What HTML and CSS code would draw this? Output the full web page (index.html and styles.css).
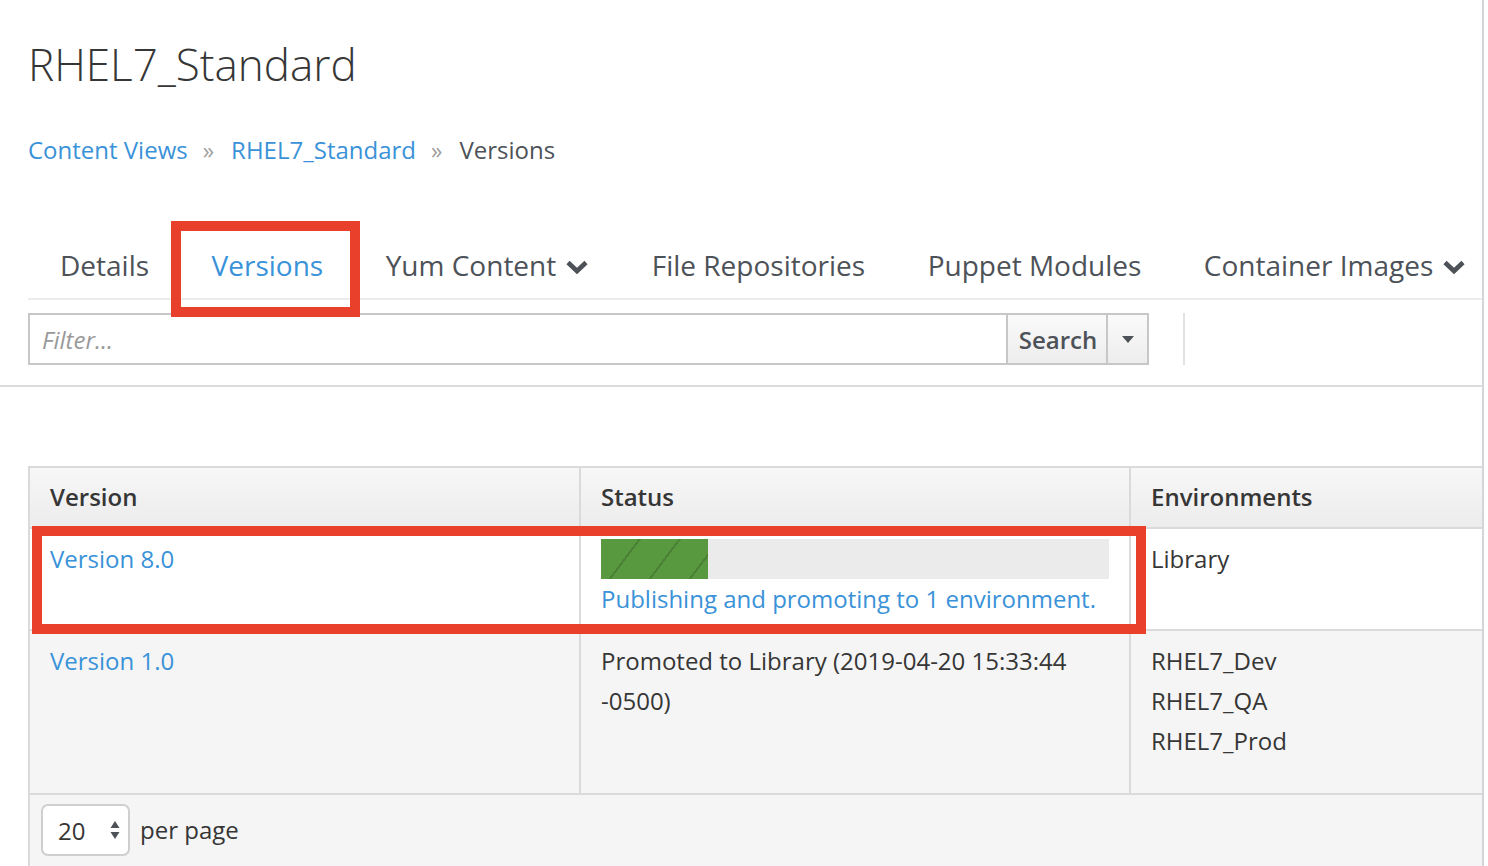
FILE: index.html
```html
<!DOCTYPE html>
<html lang="en">
<head>
<meta charset="utf-8">
<title>RHEL7_Standard - Versions</title>
<link rel="stylesheet" href="styles.css">
</head>
<body>
<div class="page">
  <section class="head">
    <h1 class="title">RHEL7_Standard</h1>
    <nav class="crumbs">
      <a class="crumb-link" href="#">Content Views</a>
      <span class="crumb-sep">»</span>
      <a class="crumb-link" href="#">RHEL7_Standard</a>
      <span class="crumb-sep">»</span>
      <span class="crumb-current">Versions</span>
    </nav>
    <ul class="tabs">
      <li class="tab">Details</li>
      <li class="tab tab-active">Versions<span class="annot annot-tab"></span></li>
      <li class="tab">Yum Content<svg class="chev" viewBox="0 0 24 16" width="24" height="16"><path d="M3 3.5 L12 12 L21 3.5" fill="none" stroke="#4d5258" stroke-width="4.6" stroke-linecap="butt" stroke-linejoin="miter"/></svg></li>
      <li class="tab">File Repositories</li>
      <li class="tab">Puppet Modules</li>
      <li class="tab">Container Images<svg class="chev" viewBox="0 0 24 16" width="24" height="16"><path d="M3 3.5 L12 12 L21 3.5" fill="none" stroke="#4d5258" stroke-width="4.6" stroke-linecap="butt" stroke-linejoin="miter"/></svg></li>
    </ul>
    <div class="toolbar">
      <div class="search-group">
        <input class="filter" type="text" placeholder="Filter...">
        <button class="btn btn-search" type="button">Search</button>
        <button class="btn btn-caret" type="button"><svg viewBox="0 0 12 7" width="12" height="7"><path d="M0 0 H12 L6 7 Z" fill="#4d5258"/></svg></button>
      </div>
      <span class="tool-divider"></span>
    </div>
  </section>

  <div class="table-wrap">
    <table class="grid">
      <colgroup>
        <col class="col-version">
        <col class="col-status">
        <col class="col-env">
      </colgroup>
      <thead>
        <tr>
          <th>Version</th>
          <th>Status</th>
          <th>Environments</th>
        </tr>
      </thead>
      <tbody>
        <tr class="row-white">
          <td><a class="link" href="#">Version 8.0</a></td>
          <td>
            <div class="progress"><div class="progress-bar" style="width: 21%"></div></div>
            <a class="link" href="#">Publishing and promoting to 1 environment.</a>
          </td>
          <td>Library</td>
        </tr>
        <tr class="row-grey">
          <td><a class="link" href="#">Version 1.0</a></td>
          <td>Promoted to Library (2019-04-20 15:33:44 -0500)</td>
          <td>
            <ul class="envs">
              <li>RHEL7_Dev</li>
              <li>RHEL7_QA</li>
              <li>RHEL7_Prod</li>
            </ul>
          </td>
        </tr>
      </tbody>
    </table>
    <span class="annot annot-row"></span>
    <div class="table-footer">
      <div class="per-page">
        <span class="select-num">20</span>
        <svg class="spin" viewBox="0 0 10 18" width="10" height="18"><path d="M5 0 L9.5 7 H0.5 Z M5 18 L9.5 11 H0.5 Z" fill="#4d5258"/></svg>
      </div>
      <span class="per-page-label">per page</span>
    </div>
  </div>
</div>
</body>
</html>
```

FILE: styles.css
```css
* { box-sizing: border-box; }

html, body {
  margin: 0;
  padding: 0;
  height: 100%;
  background: #ffffff;
}

body {
  font-family: "Open Sans", "Liberation Sans", sans-serif;
  color: #363636;
}

.page {
  width: 1484px;
  height: 100vh;
  border-right: 2px solid #d3d6d9;
  overflow: hidden;
  display: flex;
  flex-direction: column;
}

.head {
  padding: 36px 0 20px 28px;
  border-bottom: 2px solid #dcdcdc;
}

.title {
  margin: 0;
  font-size: 44px;
  font-weight: 300;
  line-height: 56px;
  color: #363636;
}

.crumbs {
  margin-top: 38px;
  font-size: 24px;
  line-height: 40px;
  display: flex;
  align-items: baseline;
}

.crumb-link {
  color: #3a92d8;
  text-decoration: none;
}

.crumb-sep {
  color: #a0a0a0;
  font-size: 23px;
  margin: 0 17px 0 15px;
}

.crumb-current {
  color: #4d5258;
}

.tabs {
  list-style: none;
  margin: 75px 0 0 0;
  padding: 0;
  display: flex;
  border-bottom: 2px solid #ececec;
  white-space: nowrap;
}

.tab {
  position: relative;
  flex-shrink: 0;
  padding: 0 30.5px 13px 32px;
  font-size: 28px;
  line-height: 40px;
  color: #4d5258;
  display: flex;
  align-items: center;
}

.tab-active {
  color: #3a92d8;
}

.chev {
  margin-left: 9px;
  margin-top: 4px;
}

.annot {
  position: absolute;
  border: 10px solid #e8402a;
  pointer-events: none;
}

.annot-tab {
  left: -9px;
  right: -6px;
  top: -24px;
  bottom: -19px;
}

.toolbar {
  margin-top: 13px;
  display: flex;
  align-items: stretch;
}

.search-group {
  display: flex;
  width: 1121px;
  height: 52px;
}

.filter {
  flex: 1;
  height: 52px;
  margin: 0;
  border: 2px solid #c7c7c7;
  border-right: none;
  padding: 0 12px;
  font-family: "Open Sans", "Liberation Sans", sans-serif;
  font-size: 24px;
  color: #363636;
  background: #ffffff;
  outline: none;
}

.filter::placeholder {
  color: #9a9a9a;
  font-style: italic;
}

.btn {
  margin: 0;
  height: 52px;
  border: 2px solid #c7c7c7;
  background: linear-gradient(#fafafa, #ededed);
  font-family: "Open Sans", "Liberation Sans", sans-serif;
  color: #4d5258;
  display: flex;
  align-items: center;
  justify-content: center;
}

.btn-search {
  width: 102px;
  font-size: 24px;
  font-weight: 600;
  padding: 0 0 0 2px;
}

.btn-caret {
  width: 41px;
  border-left: none;
  padding: 0;
}

.tool-divider {
  width: 2px;
  background: #e2e2e2;
  margin-left: 34px;
}

.table-wrap {
  position: relative;
  margin: 79px 0 0 28px;
  flex: 1;
  display: flex;
  flex-direction: column;
}

.grid {
  width: 1460px;
  border-collapse: collapse;
  font-size: 24px;
  line-height: 40px;
  color: #363636;
}

.col-version { width: 551px; }
.col-status { width: 550px; }
.col-env { width: auto; }

.grid th,
.grid td {
  border: 2px solid #dadada;
  text-align: left;
  vertical-align: top;
}

.grid th {
  padding: 9px 20px 10px;
  font-weight: 600;
  background: linear-gradient(#f7f7f7, #ececec);
}

.grid td {
  padding: 10px 20px 10px;
}

.row-white td { background: #ffffff; }
.row-grey td { background: #f5f5f5; }

.link {
  color: #3a92d8;
  text-decoration: none;
}

.progress {
  height: 40px;
  background: #ebebeb;
  width: 508px;
}

.progress-bar {
  height: 100%;
  background-color: #58993f;
  background-image: repeating-linear-gradient(127deg, transparent 0 30px, rgba(0, 0, 0, 0.16) 30px 32px);
}

.envs {
  list-style: none;
  margin: 0 0 22px 0;
  padding: 0;
}

.annot-row {
  left: 4px;
  top: 60px;
  width: 1114px;
  height: 108px;
}

.table-footer {
  flex: 1;
  background: #f5f5f5;
  border-left: 2px solid #dadada;
  padding: 9px 0 0 11px;
  display: flex;
  align-items: flex-start;
  gap: 10px;
}

.per-page {
  width: 89px;
  height: 52px;
  border: 2px solid #cfcfcf;
  border-radius: 7px;
  background: #ffffff;
  display: flex;
  align-items: center;
  justify-content: space-between;
  padding: 0 8px 0 15px;
}

.select-num {
  font-size: 24px;
  color: #363636;
}

.per-page-label {
  font-size: 24px;
  line-height: 52px;
  color: #363636;
}
```
